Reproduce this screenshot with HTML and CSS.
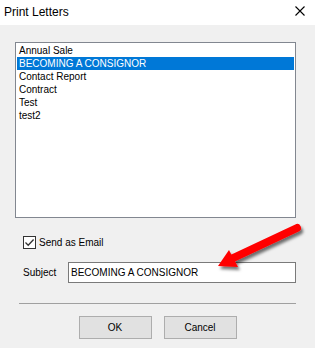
FILE: index.html
```html
<!DOCTYPE html>
<html lang="en">
<head>
    <meta charset="UTF-8">
    <title>Print Letters</title>
    <link rel="stylesheet" href="styles.css">
</head>
<body>
    <div class="dialog">
        <div class="titlebar">
            <span class="title">Print Letters</span>
            <svg class="close" width="10" height="10" viewBox="0 0 10 10">
                <path d="M0.5 0.5 L9.5 9.5 M9.5 0.5 L0.5 9.5" stroke="#000" stroke-width="1.1" fill="none"/>
            </svg>
        </div>

        <div class="content">
            <ul class="listbox">
                <li>Annual Sale</li>
                <li class="selected">BECOMING A CONSIGNOR</li>
                <li>Contact Report</li>
                <li>Contract</li>
                <li>Test</li>
                <li>test2</li>
            </ul>

            <label class="check-row">
                <span class="checkbox">
                    <svg width="11" height="11" viewBox="0 0 11 11">
                        <path d="M1.5 5.5 L4.2 8.2 L9.6 2.5" stroke="#333" stroke-width="1.3" fill="none"/>
                    </svg>
                </span>
                Send as Email
            </label>

            <div class="subject-row">
                <span class="subject-label">Subject</span>
                <div class="textbox">BECOMING A CONSIGNOR</div>
            </div>

            <hr class="separator">

            <div class="buttons">
                <button type="button" class="btn">OK</button>
                <button type="button" class="btn">Cancel</button>
            </div>
        </div>

        <!-- annotation arrow drawn over the screenshot -->
        <svg class="arrow" width="110" height="65" viewBox="205 215 110 65">
            <defs>
                <filter id="shadow" x="-20%" y="-30%" width="150%" height="170%">
                    <feDropShadow dx="2" dy="3" stdDeviation="1.6" flood-color="#000" flood-opacity="0.55"/>
                </filter>
            </defs>
            <g filter="url(#shadow)" fill="#ff0000">
                <path d="M297 228 L231 259" stroke="#ff0000" stroke-width="8" stroke-linecap="round"/>
                <polygon points="218,266 229,250 238,267"/>
            </g>
        </svg>
    </div>
</body>
</html>
```

FILE: styles.css
```css
body {
    margin: 0;
    padding: 0;
    font-family: "Liberation Sans", Arial, sans-serif;
    font-size: 10px;
    color: #000;
}

.dialog {
    position: relative;
    width: 315px;
    height: 348px;
    background: #f0f0f0;
    overflow: hidden;
}

.titlebar {
    height: 25px;
    background: #ffffff;
    display: flex;
    align-items: center;
    justify-content: space-between;
    padding: 0 10px 0 4px;
}

.title {
    font-size: 12px;
    margin-top: -2px;
}

.close {
    margin-top: -4px;
}

.content {
    padding: 17px 19px 0 15px;
}

.listbox {
    list-style: none;
    margin: 0;
    padding: 1px 1px 0 1px;
    height: 173px;
    border: 1px solid #828790;
    background: #ffffff;
}

.listbox li {
    height: 13px;
    line-height: 13px;
    padding-left: 2px;
    white-space: nowrap;
}

.listbox li.selected {
    background: #0078d7;
    color: #ffffff;
}

.check-row {
    display: flex;
    align-items: center;
    gap: 3px;
    margin: 18px 0 0 8px;
    height: 13px;
}

.checkbox {
    width: 11px;
    height: 11px;
    border: 1px solid #333333;
    background: #ffffff;
    display: flex;
}

.subject-row {
    display: flex;
    align-items: center;
    margin-top: 13px;
    padding-left: 8px;
}

.subject-label {
    width: 45px;
}

.textbox {
    flex: 1;
    height: 19px;
    line-height: 19px;
    border: 1px solid #7a7a7a;
    background: #ffffff;
    padding-left: 2px;
    white-space: nowrap;
}

.separator {
    margin: 20px 0 0 4px;
    border: none;
    border-top: 1px solid #a0a0a0;
    height: 0;
}

.buttons {
    display: flex;
    justify-content: center;
    gap: 12px;
    margin-top: 12px;
    padding-left: 4px;
}

.btn {
    width: 73px;
    height: 23px;
    background: #e1e1e1;
    border: 1px solid #adadad;
    font-family: "Liberation Sans", Arial, sans-serif;
    font-size: 10px;
    padding: 0;
}

.arrow {
    position: absolute;
    left: 205px;
    top: 215px;
}
```
